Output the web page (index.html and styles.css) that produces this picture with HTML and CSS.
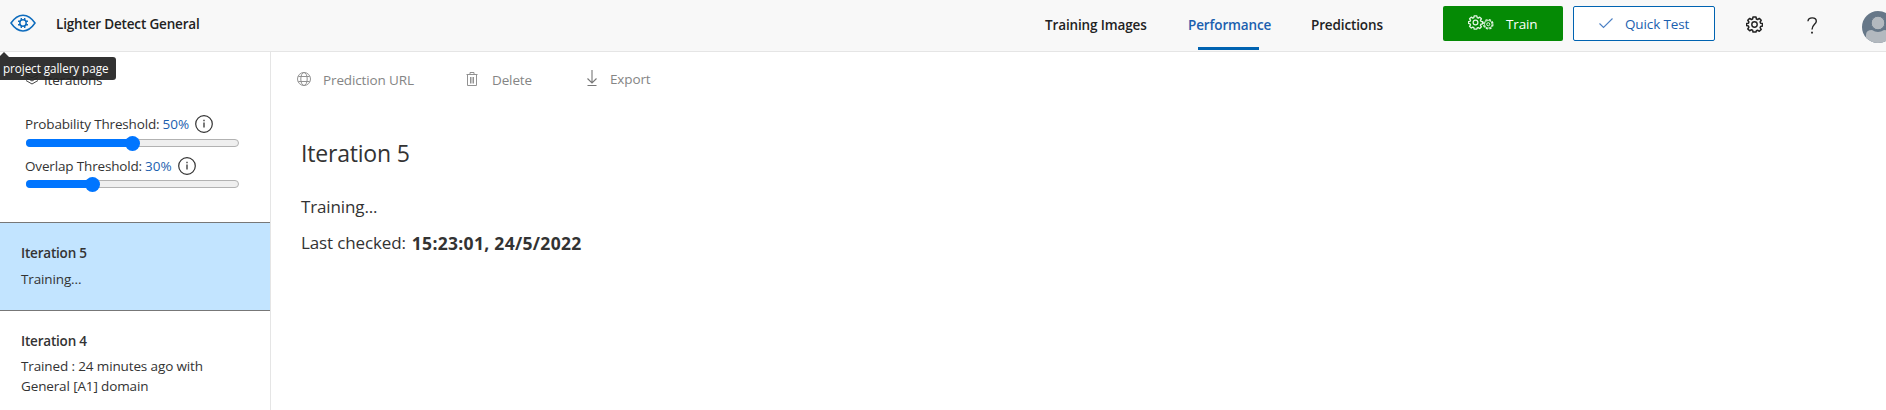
FILE: index.html
```html
<!DOCTYPE html>
<html lang="en">
<head>
<meta charset="utf-8">
<title>Lighter Detect General</title>
<link rel="stylesheet" href="styles.css">
</head>
<body>
<header class="topbar">
  <a class="logo"><svg width="26" height="18" viewBox="0 0 26 18" fill="none" stroke="#0f6cbd" stroke-width="1.500"><path d="M1 9C8-1.500 18-1.500 25 9C18 19.500 8 19.500 1 9Z"/><circle cx="13" cy="9" r="3.200"/><path stroke-width="1.400" d="M11.300 4v2.200M14.700 4v2.200M11.300 11.800V14M14.700 11.800V14M8 7.300h2.200M8 10.700h2.200M15.800 7.300H18M15.800 10.700H18"/></svg></a>
  <h1 class="project">Lighter Detect General</h1>
  <nav class="tabs">
    <a class="tab tab-images">Training Images</a>
    <a class="tab tab-performance">Performance</a>
    <a class="tab tab-predictions">Predictions</a>
  </nav>
  <button class="btn train"><svg class="gears" width="26" height="16" viewBox="0 0 26 16" fill="none" stroke="#e2f5e2"><use href="#cog" width="15" height="15"/><use href="#cog-small" x="14.500" y="3.500" width="11.500" height="11.500"/></svg><span>Train</span></button>
  <button class="btn quick"><svg class="check" width="14" height="11" viewBox="0 0 14 11" fill="none" stroke="#4a7fc4" stroke-width="1.100"><path d="M.5 5.500l4 4L13.500.5"/></svg><span>Quick Test</span></button>
  <svg class="settings" width="17" height="17" stroke="#222" fill="none"><use href="#cog" width="17" height="17"/></svg>
  <svg class="help" width="11" height="17" viewBox="0 0 11 17" fill="none" stroke="#222" stroke-width="1.400"><path d="M1 4.200C1.200-.2 9.300-.2 9.300 4.200C9.300 7.300 5 7.700 5 12.500"/><path stroke-width="1.800" d="M4.100 15.700h1.800"/></svg>
  <svg class="avatar" width="32" height="32" viewBox="0 0 32 32"><defs><clipPath id="disc"><circle cx="16" cy="16" r="16"/></clipPath></defs><g clip-path="url(#disc)"><path fill="#667788" d="M0 0h32v32H0z"/><path fill="#b3b9bf" d="M4 32V24q0-5 6-5q6 4 12 0q6 0 6 5v8z"/><circle cx="16" cy="12" r="6.800" fill="#b3b9bf" stroke="#667788"/></g></svg>
</header>
<div class="layout">
  <aside class="sidebar">
    <div class="iterations"><svg width="14" height="15" viewBox="0 0 14 15" fill="none" stroke="#444"><path d="M7 1l6 3.500-6 3.500-6-3.500zM1 7.500L7 11l6-3.500M1 10.500L7 14l6-3.500"/></svg><span>Iterations</span></div>
    <div class="field"><span>Probability Threshold:</span><span class="value">50%</span><svg class="info" width="18" height="18" viewBox="0 0 18 18"><use href="#info"/></svg></div>
    <div class="slider"><div class="fill half"></div><div class="thumb"></div></div>
    <div class="field overlap"><span>Overlap Threshold:</span><span class="value">30%</span><svg class="info" width="18" height="18" viewBox="0 0 18 18"><use href="#info"/></svg></div>
    <div class="slider"><div class="fill third"></div><div class="thumb"></div></div>
    <section class="card selected"><h2>Iteration 5</h2><p>Training...</p></section>
    <section class="card"><h2>Iteration 4</h2><p>Trained : 24 minutes ago with<br>General [A1] domain</p></section>
  </aside>
  <main class="content">
    <div class="toolbar">
      <a class="tool url"><svg width="14" height="14" viewBox="0 0 14 14" fill="none" stroke="#929292"><circle cx="7" cy="7" r="6.500"/><ellipse cx="7" cy="7" rx="3.200" ry="6.500"/><path d="M1.300 4.500h11.400M1.300 9.500h11.400"/></svg><span>Prediction URL</span></a>
      <a class="tool delete"><svg width="12" height="14" viewBox="0 0 12 14" fill="none" stroke="#929292"><path d="M.5 2.500h11M4 2.500v-2h4v2M1.500 2.500v11h9v-11M4.500 5v6.500M6 5v6.500M7.500 5v6.500"/></svg><span>Delete</span></a>
      <a class="tool export"><svg width="10" height="16" viewBox="0 0 10 16" fill="none" stroke="#777" stroke-width="1.100"><path d="M5 0v12.500M.5 8.500L5 13l4.500-4.500M.5 15.500h9"/></svg><span>Export</span></a>
    </div>
    <h2 class="heading">Iteration 5</h2>
    <p class="status">Training...</p>
    <p class="checked"><span>Last checked:</span><b>15:23:01, 24/5/2022</b></p>
  </main>
</div>
<div class="tooltip">project gallery page</div>
<svg class="symbols" width="0" height="0">
  <symbol id="cog" viewBox="0 0 17 17"><path stroke-width="1.500" stroke-linejoin="round" d="M7 1h3l.4 2 1.200.5L13.300 2.400l1.900 1.900-1.100 1.700.5 1.200 1.900.3v2.600l-1.900.4-.5 1.200 1.100 1.700-1.900 1.900-1.700-1.100-1.200.5L10 16H7l-.4-1.800-1.200-.5-1.700 1.100-1.900-1.900 1.100-1.700-.5-1.200-1.900-.4V7.500l1.900-.3.5-1.200-1.100-1.700 1.900-1.900 1.700 1.100L6.600 3z"/><circle cx="8.500" cy="8.500" r="2.700" stroke-width="1.400"/></symbol>
  <symbol id="cog-small" viewBox="0 0 12 12"><circle cx="6" cy="6" r="4.900" stroke-width="1.400" stroke-dasharray="2.400 1.450"/><circle cx="6" cy="6" r="4" stroke-width=".9"/><circle cx="6" cy="6" r="1.600"/></symbol>
  <symbol id="info" viewBox="0 0 18 18"><circle cx="9" cy="9" r="8.300" fill="none" stroke="#333" stroke-width="1.200"/><path d="M9 7.500v5M9 4.800v1.400" stroke="#333" stroke-width="1.300"/></symbol>
</svg>
</body>
</html>
```
FILE: styles.css
```css
* { box-sizing: border-box; margin: 0; padding: 0; }
body { width: 1886px; height: 410px; overflow: hidden; background: #fff; color: #333; font: 13.5px/20px "Open Sans", sans-serif; letter-spacing: -.13px; }
h1, h2 { font: inherit; }
a, span, b { white-space: nowrap; }
svg { display: block; flex: none; }
.symbols { position: absolute; }
.topbar { display: flex; align-items: flex-start; height: 52px; background: #f8f8f8; border-bottom: 1px solid #e5e5e5; color: #222; }
.topbar > * { flex: none; }
.logo { width: 56px; padding: 14px 0 0 10px; }
.project { width: 989px; padding-top: 14px; font-weight: 550; letter-spacing: -.17px; }
.tabs { display: flex; width: 398px; font-weight: 550; letter-spacing: -.13px; }
.tab { height: 50px; padding-top: 15px; }
.tab-images { width: 143px; }
.tab-performance { width: 81px; margin-right: 42px; color: #1b5faf; background: linear-gradient(#0063b1, #0063b1) 10px 47px / 61px 3px no-repeat; }
.btn { display: flex; height: 35px; margin-top: 6px; border: 0; border-radius: 2px; font: inherit; letter-spacing: inherit; }
.train { width: 120px; background: #058a05; color: #fff; padding: 8px 0 0 25px; }
.gears { margin: 1px 12px 0 0; }
.quick { width: 142px; margin-left: 10px; background: #fff; border: 1px solid #0063b1; color: #1b5faf; padding: 7px 0 0 25px; }
.check { margin: 4px 12px 0 0; }
.settings { margin: 16px 0 0 31px; }
.help { margin: 17px 0 0 44px; }
.avatar { margin: 11px 0 0 44px; }
.layout { display: flex; height: 358px; }
.sidebar { width: 271px; flex: none; border-right: 1px solid #e5e5e5; padding-top: 18px; }
.iterations { display: flex; gap: 5px; height: 44px; padding-left: 25px; letter-spacing: -.2px; }
.field { display: flex; gap: 3px; height: 25px; padding-left: 25px; letter-spacing: -.16px; }
.info { margin: 1px 0 0 3px; }
.value { color: #1b5faf; letter-spacing: 0; }
.slider { position: relative; width: 213px; height: 8px; margin-left: 26px; border: 1px solid #b2b2b2; border-radius: 4px; background: #efefef; }
.fill { height: 8px; margin: -1px; border-radius: 4px; background: #0075ff; }
.half { width: 107px; }
.third { width: 67px; }
.thumb { position: absolute; top: -4.500px; left: 98px; width: 15px; height: 15px; border-radius: 50%; background: #0075ff; }
.third + .thumb { left: 58px; }
.overlap { height: 33px; padding-top: 9px; }
.card { padding: 20px 21px; }
.card h2 { margin-bottom: 5px; font-weight: 600; letter-spacing: -.2px; }
.selected { height: 89px; margin-top: 34px; background: #c2e4ff; border: 1px solid #777; border-width: 1px 0; }
.selected h2 { margin-bottom: 6px; }
.content { flex: 1; padding: 17px 0 0 26px; }
.toolbar { display: flex; height: 68px; color: #858585; }
.tool { display: flex; gap: 12px; padding-top: 1px; }
.tool svg { margin-top: 2px; }
.url { width: 169px; }
.delete { width: 121px; gap: 14px; }
.export { gap: 13px; padding: 0; }
.export svg { margin-top: 1px; }
.heading { padding-left: 4px; font-size: 23px; line-height: 32px; letter-spacing: -.2px; }
.status, .checked { padding-left: 4px; font-size: 17px; line-height: 36px; }
.status { margin-top: 20px; }
.checked { display: flex; gap: 6px; }
.checked b { font-size: 17.5px; letter-spacing: .3px; }
.tooltip { position: absolute; left: 0; top: 57px; width: 116px; height: 23px; padding-left: 3px; background: rgba(34, 34, 34, .93); color: #fff; border-radius: 0 3px 3px 0; font-size: 11.700px; line-height: 23px; letter-spacing: -.07px; }
.tooltip::before { content: ""; position: absolute; left: -1px; top: -5px; border: 5px solid transparent; border-top: 0; border-bottom-color: #333; }
```
